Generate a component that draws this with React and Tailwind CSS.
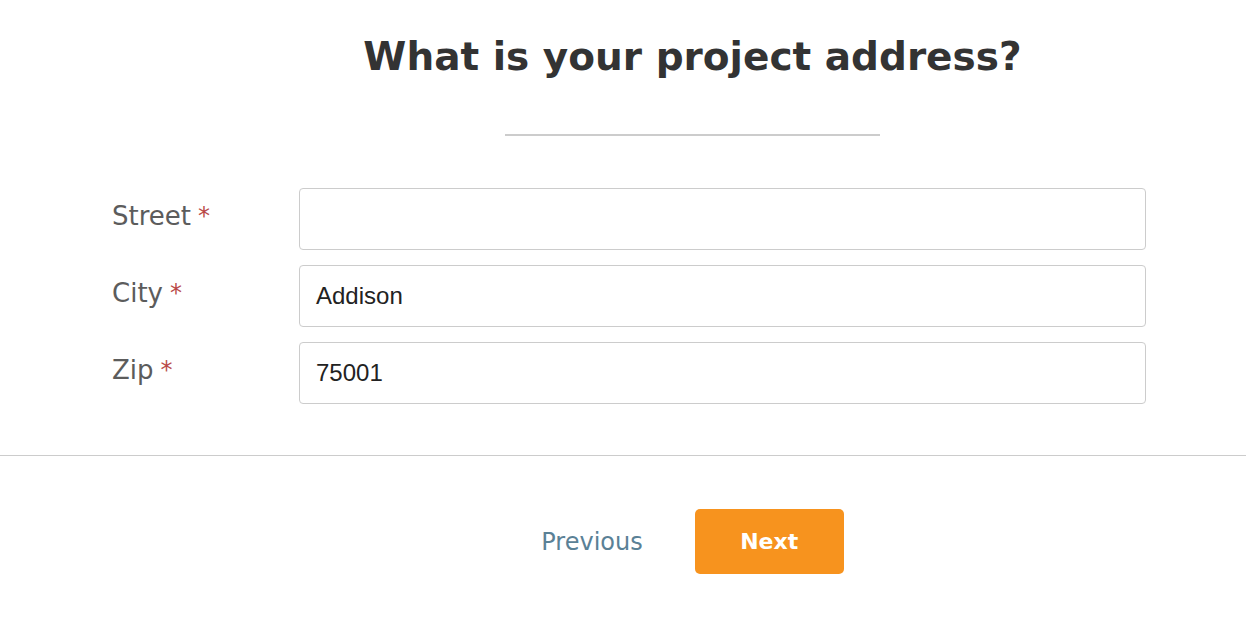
export default function App() {
  const rows = [
    { label: "Street", value: "" },
    { label: "City", value: "Addison" },
    { label: "Zip", value: "75001" },
  ];
  return (
    <div className="w-[1246px] h-[617px] bg-white overflow-hidden" style={{ fontFamily: "'DejaVu Sans', 'Open Sans', sans-serif" }}>
      <div className="pl-[139px]">
        <h1 className="text-center text-[39px] leading-[46px] font-bold text-[#333333] pt-[34px]">
          What is your project address?
        </h1>
        <div className="flex justify-center mt-[54px]">
          <div className="w-[375px] h-[2px] bg-[#cccccc]" />
        </div>
      </div>
      <div className="flex flex-col gap-[15px] pl-[112px] pr-[100px] mt-[52px]">
        {rows.map((r) => (
          <div key={r.label} className="flex items-start">
            <div className="w-[187px] shrink-0 pt-[12px] text-[26px] leading-[32px] text-[#5c5c5c]">
              {r.label}
              <span className="text-[#b94a48] ml-[7px] text-[24px] align-top">*</span>
            </div>
            <div className="flex-1 h-[62px] border border-[#cccccc] rounded-[4px] flex items-center px-[16px] text-[24px] text-[#222222]" style={{ fontFamily: "'Liberation Sans', Arial, sans-serif" }}>
              {r.value}
            </div>
          </div>
        ))}
      </div>
      <div className="mt-[51px] h-px bg-[#cccccc]" />
      <div className="pl-[139px]">
        <div className="flex justify-center items-center mt-[53px] gap-[52px]">
          <span className="text-[24px] text-[#5a8196]">Previous</span>
          <button className="w-[149px] h-[65px] rounded-[5px] bg-[#f7931e] text-white text-[22px] font-bold">Next</button>
        </div>
      </div>
    </div>
  );
}
